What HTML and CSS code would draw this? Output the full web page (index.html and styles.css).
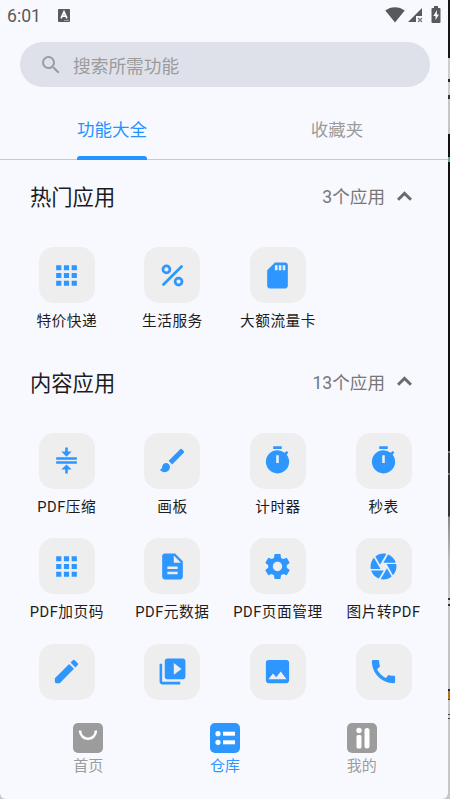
FILE: index.html
```html
<!DOCTYPE html>
<html lang="zh-CN">
<head>
<meta charset="utf-8">
<title>功能大全</title>
<link rel="stylesheet" href="styles.css">
</head>
<body>
<svg class="defs" aria-hidden="true">
  <symbol id="apps" viewBox="0 0 24 24"><path d="M4 8h4V4H4v4zm6 12h4v-4h-4v4zm-6 0h4v-4H4v4zm0-6h4v-4H4v4zm6 0h4v-4h-4v4zm6-10v4h4V4h-4zm-6 4h4V4h-4v4zm6 6h4v-4h-4v4zm0 6h4v-4h-4v4z"/></symbol>
  <symbol id="timer" viewBox="0 0 24 24"><path d="M8.700 1h6.600v2H8.700zM19.030 7.390l1.420-1.420c-.43-.51-.9-.99-1.410-1.410l-1.420 1.420A8.960 8.960 0 0 0 12 4a9 9 0 1 0 7.030 3.390zM13 14h-2V8h2v6z"/></symbol>
  <symbol id="up" viewBox="0 0 24 24"><path d="M12 7.700l-6.200 6.200 1.700 1.700L12 11.100l4.500 4.500 1.700-1.700z"/></symbol>
</svg>
<div class="screen">
  <header class="status">
    <span class="clock">6:01</span>
    <svg class="ime" viewBox="0 0 12 13"><rect width="12" height="13" rx="1"/><path class="ime-a" d="M3 9.400L6 2.800l3 6.600M4.200 7.200h3.600"/><path class="ime-line" d="M6 11.400h5"/></svg>
    <svg class="wifi" viewBox="0 0 20 16"><path d="M10 15.500L.3 3.600C3 1.400 6.400.2 10 .2s7 1.200 9.700 3.400z"/></svg>
    <svg class="signal" viewBox="0 0 15 15"><path d="M14 0v8H8v6H0z"/><path class="cross" d="M10 10l4 4M14 10l-4 4"/></svg>
    <svg class="battery" viewBox="0 0 10 17"><path d="M3 0h4v2h1.500q1 0 1 1v13q0 1-1 1h-7q-1 0-1-1V3q0-1 1-1H3z"/><path class="bolt" d="M6 4L2.300 10h2.200v4L8 8.400H5.800z"/></svg>
  </header>

  <div class="search">
    <svg class="search-icon" viewBox="0 0 24 24"><path d="M15.500 14h-.79l-.28-.27A6.471 6.471 0 0 0 16 9.500 6.500 6.500 0 1 0 9.500 16c1.610 0 3.090-.59 4.230-1.570l.27.28v.79l5 4.990L20.490 19l-4.990-5zm-6 0C7.010 14 5 11.990 5 9.500S7.010 5 9.500 5 14 7.010 14 9.500 11.990 14 9.500 14z"/></svg>
    <span>搜索所需功能</span>
  </div>

  <nav class="tabs">
    <div class="tab active"><span>功能大全</span></div>
    <div class="tab"><span>收藏夹</span></div>
  </nav>

  <main class="content">
    <section class="section">
      <div class="heading"><h2>热门应用</h2><span class="count">3个应用</span><svg class="chevron"><use href="#up"/></svg></div>
      <div class="grid">
        <div class="app"><div class="tile"><svg><use href="#apps"/></svg></div><span>特价快递</span></div>
        <div class="app"><div class="tile"><svg viewBox="0 0 24 24"><g class="line"><circle cx="7.300" cy="7.300" r="2.700"/><circle cx="16.700" cy="16.700" r="2.700"/><path d="M5 19L19 5"/></g></svg></div><span>生活服务</span></div>
        <div class="app"><div class="tile"><svg viewBox="0 0 24 24"><path d="M18 2h-8L4.020 8 4 20c0 1.100.9 2 2 2h12c1.100 0 2-.9 2-2V4c0-1.100-.9-2-2-2zm-6 6h-2V4h2v4zm3 0h-2V4h2v4zm3 0h-2V4h2v4z"/></svg></div><span>大额流量卡</span></div>
      </div>
    </section>
    <section class="section">
      <div class="heading"><h2>内容应用</h2><span class="count">13个应用</span><svg class="chevron"><use href="#up"/></svg></div>
      <div class="grid">
        <div class="app"><div class="tile"><svg viewBox="0 0 24 24"><path d="M8 19h3v3h2v-3h3l-4-4-4 4zm8-14h-3V2h-2v3H8l4 4 4-4zM4 9.500v1.900h16V9.500H4zm0 3.100v1.900h16v-1.900H4z"/></svg></div><span>PDF压缩</span></div>
        <div class="app"><div class="tile"><svg viewBox="0 0 24 24"><path d="M7 14c-1.660 0-3 1.340-3 3 0 1.310-1.160 2-2 2 .92 1.220 2.490 2 4 2 2.210 0 4-1.790 4-4 0-1.660-1.340-3-3-3zm13.710-9.370l-1.340-1.340a1 1 0 0 0-1.410 0L9 12.250 11.750 15l8.960-8.960a1 1 0 0 0 0-1.410z"/></svg></div><span>画板</span></div>
        <div class="app"><div class="tile"><svg><use href="#timer"/></svg></div><span>计时器</span></div>
        <div class="app"><div class="tile"><svg><use href="#timer"/></svg></div><span>秒表</span></div>
        <div class="app"><div class="tile"><svg><use href="#apps"/></svg></div><span>PDF加页码</span></div>
        <div class="app"><div class="tile"><svg viewBox="0 0 24 24"><path d="M14 2H6c-1.100 0-1.990.9-1.990 2L4 20c0 1.100.89 2 1.990 2H18c1.100 0 2-.9 2-2V8l-6-6zm2 16H8v-2h8v2zm0-4H8v-2h8v2zm-3-5V3.500L18.500 9H13z"/></svg></div><span>PDF元数据</span></div>
        <div class="app"><div class="tile"><svg viewBox="0 0 24 24"><path d="M19.140 12.940c.04-.3.060-.61.060-.94 0-.32-.02-.64-.07-.94l2.030-1.580c.18-.14.230-.41.120-.61l-1.920-3.320c-.12-.22-.37-.29-.59-.22l-2.390.96c-.5-.38-1.030-.7-1.620-.94l-.36-2.540c-.04-.24-.24-.41-.48-.41h-3.840c-.24 0-.43.170-.47.410l-.36 2.540c-.59.240-1.130.570-1.620.940l-2.390-.96c-.22-.08-.47 0-.59.220L2.740 8.870c-.12.210-.08.470.12.610l2.030 1.580c-.05.300-.09.630-.09.940s.02.640.07.940l-2.030 1.580c-.18.140-.23.410-.12.610l1.920 3.320c.12.220.37.290.59.220l2.390-.96c.5.380 1.030.7 1.620.940l.36 2.540c.05.240.24.410.48.410h3.840c.24 0 .44-.17.470-.41l.36-2.540c.59-.24 1.130-.56 1.620-.94l2.390.96c.22.080.47 0 .59-.22l1.920-3.320c.12-.22.070-.47-.12-.61l-2.010-1.580zM12 15.600c-1.980 0-3.600-1.620-3.600-3.600s1.620-3.600 3.600-3.600 3.600 1.620 3.600 3.600-1.620 3.600-3.600 3.600z"/></svg></div><span>PDF页面管理</span></div>
        <div class="app"><div class="tile"><svg viewBox="0 0 24 24"><path d="M9.400 10.500l4.770-8.260C13.470 2.090 12.750 2 12 2c-2.400 0-4.600.85-6.320 2.250l3.660 6.350.06-.1zM21.540 9c-.92-2.920-3.150-5.260-6-6.340L11.880 9h9.660zm.26 1h-7.490l.29.500 4.760 8.250C21 16.970 22 14.610 22 12c0-.69-.07-1.350-.2-2zM8.540 12l-3.900-6.750C3.010 7.030 2 9.390 2 12c0 .69.070 1.350.2 2h7.490l-1.150-2zm-6.080 3c.92 2.920 3.150 5.260 6 6.340L12.120 15H2.460zm11.270 0l-3.900 6.760c.7.150 1.420.24 2.170.24 2.400 0 4.600-.85 6.320-2.250l-3.660-6.350-.93 1.600z"/></svg></div><span>图片转PDF</span></div>
        <div class="app"><div class="tile"><svg viewBox="0 0 24 24"><path d="M3 17.250V20q0 1 1 1h2.750L17.810 9.940l-3.750-3.750L3 17.250zM20.710 7.040a1 1 0 0 0 0-1.410l-2.340-2.340a1 1 0 0 0-1.410 0l-1.830 1.830 3.750 3.750 1.830-1.830z"/></svg></div></div>
        <div class="app"><div class="tile"><svg viewBox="0 0 24 24"><path d="M4 6H2v14c0 1.100.9 2 2 2h14v-2H4V6zm16-4H8c-1.100 0-2 .9-2 2v12c0 1.100.9 2 2 2h12c1.100 0 2-.9 2-2V4c0-1.100-.9-2-2-2zm-7 12.500v-9l6 4.500-6 4.500z"/></svg></div></div>
        <div class="app"><div class="tile"><svg viewBox="0 0 24 24"><path d="M21 19V5c0-1.100-.9-2-2-2H5c-1.100 0-2 .9-2 2v14c0 1.100.9 2 2 2h14c1.100 0 2-.9 2-2zM8.500 13.500l2.500 3.010L14.500 12l4.500 6H5l3.500-4.500z"/></svg></div></div>
        <div class="app"><div class="tile"><svg viewBox="0 0 24 24"><path d="M20.010 15.380c-1.230 0-2.420-.2-3.530-.56-.35-.12-.74-.03-1.010.24l-1.570 1.970c-2.830-1.350-5.480-3.900-6.890-6.830l1.950-1.660c.27-.28.350-.67.240-1.020-.37-1.110-.56-2.300-.56-3.530 0-.54-.45-.99-.99-.99H4.190C3.650 3 3 3.240 3 3.990 3 13.280 10.730 21 20.010 21c.71 0 .99-.63.990-1.180v-3.450c0-.54-.45-.99-.99-.99z"/></svg></div></div>
      </div>
    </section>
  </main>

  <footer class="bottom">
    <div class="item"><svg viewBox="0 0 30 30"><rect width="30" height="30" rx="5"/><path class="cut" d="M7 7.500C7.500 18.500 22.500 18.500 23 7.500"/></svg><span>首页</span></div>
    <div class="item active"><svg viewBox="0 0 30 30"><rect width="30" height="30" rx="5"/><g class="hole"><circle cx="8" cy="10.700" r="2.600"/><circle cx="8" cy="19.300" r="2.600"/><rect x="13" y="8.700" width="12" height="4"/><rect x="13" y="17.300" width="12" height="4"/></g></svg><span>仓库</span></div>
    <div class="item"><svg viewBox="0 0 30 30"><rect width="30" height="30" rx="5"/><g class="hole"><circle cx="12" cy="7.500" r="2.700"/><rect x="9.500" y="12" width="5" height="13.500" rx="1.500"/><rect x="17.500" y="5" width="5" height="20.500" rx="2.500"/></g></svg><span>我的</span></div>
  </footer>
</div>
</body>
</html>
```
FILE: styles.css
```css
* { box-sizing: border-box; }

body {
  margin: 0;
  height: 799px;
  overflow: hidden;
  font-family: Roboto, "Noto Sans CJK SC", sans-serif;
  background: linear-gradient(#151515 0 58px, #d0cccc 58px 79px, #222 79px 82px, #d0cccc 82px 95px, #333 95px 99px, #c8c5c5 99px 134px, #111 134px 157px, #68a0a8 157px 162px, #111 162px 451px, #777 451px 453px, #333 453px 473px, #777 473px 475px, #333 475px 516px, #888 517px, #bbb 560px, #c8c8c8 598px, #333 598px 600px, #ccc 600px 604px, #333 604px 606px, #c4c4c4 606px 689px, #222 689px 691px, #b8741c 691px 699px, #333 699px 700px, #c8c8c8 700px 714px, #444 714px 715px, #ccc 715px 718px, #444 718px 719px, #c6c6c6 719px);
}

svg { display: block; fill: currentColor; flex: none; }
.defs { position: absolute; width: 0; height: 0; }

.screen {
  width: 448px;
  height: 799px;
  display: flex;
  flex-direction: column;
  overflow: hidden;
  background: #f8f9ff;
  border-radius: 0 0 6px 6px;
}

.status {
  height: 42px;
  flex: none;
  display: flex;
  align-items: center;
  padding: 0 7px 11px 7px;
  color: #58595c;
}
.clock { width: 51px; font-size: 17.600px; line-height: 20px; }
.ime { width: 12px; height: 13px; margin-right: auto; margin-top: -1px; }
.ime-a { fill: none; stroke: #fff; stroke-width: 1.700; }
.ime-line { stroke: #bbb; stroke-width: .8; }
.wifi { width: 20px; height: 16px; margin-right: 3px; margin-top: -2px; }
.signal { width: 15px; height: 15px; margin-right: 8px; margin-top: 0; }
.cross { fill: none; stroke: #77787b; stroke-width: 1.200; }
.battery { width: 10px; height: 17px; margin-top: -2px; }
.bolt { fill: #f8f9ff; }

.search {
  width: 410px;
  height: 45px;
  flex: none;
  margin-left: 20px;
  padding: 0 19px;
  display: flex;
  align-items: center;
  gap: 10px;
  border-radius: 23px;
  background: #dee1ea;
  color: #9b9b9b;
  font-size: 17.700px;
}
.search-icon { width: 24px; height: 24px; }

.tabs {
  height: 73px;
  flex: none;
  display: flex;
  padding-top: 13px;
  border-bottom: 1px solid #c8c9d4;
}
.tab {
  flex: 1;
  display: flex;
  justify-content: center;
  padding-left: 1px;
  color: #9b9b9b;
  font-size: 17.500px;
}
.tab + .tab { padding-left: 3px; }
.tab span { display: flex; flex-direction: column; height: 60px; line-height: 60px; }
.tab.active { color: #2492ff; }
.tab.active span::after {
  content: "";
  height: 4px;
  flex: none;
  margin-top: -4px;
  border-radius: 3px 3px 0 0;
  background: #2492ff;
}

.content { flex: 1; min-height: 0; overflow: hidden; }
.heading {
  height: 74px;
  display: flex;
  align-items: center;
  padding: 0 31px 3px 30px;
}
.heading h2 {
  margin: 0 auto 0 0;
  font-size: 21.300px;
  font-weight: 400;
  color: #1c1c1f;
}
.count { font-size: 17.600px; color: #777; }
.chevron { width: 29px; height: 29px; color: #6b6b6b; margin: 1px -2px 0 5px; }

.grid {
  display: grid;
  grid-template-columns: repeat(4, 105.600px);
  row-gap: 21.500px;
  padding: 13px 0 14.500px 14px;
}
.app {
  height: 84px;
  display: flex;
  flex-direction: column;
  align-items: center;
  gap: 8px;
  white-space: nowrap;
  font-size: 14.700px;
  letter-spacing: .5px;
  line-height: 20px;
  color: #1d1d20;
}
.tile {
  width: 56px;
  height: 56px;
  display: grid;
  place-items: center;
  border-radius: 15px;
  background: #eee;
  color: #2e96ff;
}
.tile svg { width: 31px; height: 31px; }
.line { fill: none; stroke: currentColor; stroke-width: 2.100; stroke-linecap: round; }

.bottom {
  height: 94px;
  flex: none;
  display: flex;
  padding: 18px 18px 0 20px;
}
.item {
  flex: 1;
  display: flex;
  flex-direction: column;
  align-items: center;
  gap: 3px;
  color: #9c9c9c;
  font-size: 15px;
  line-height: 20px;
}
.item svg { width: 30px; height: 30px; }
.item.active { color: #2e96ff; }
.cut { fill: none; stroke: #fff; stroke-width: 2.600; }
.hole { fill: #fff; }
```
